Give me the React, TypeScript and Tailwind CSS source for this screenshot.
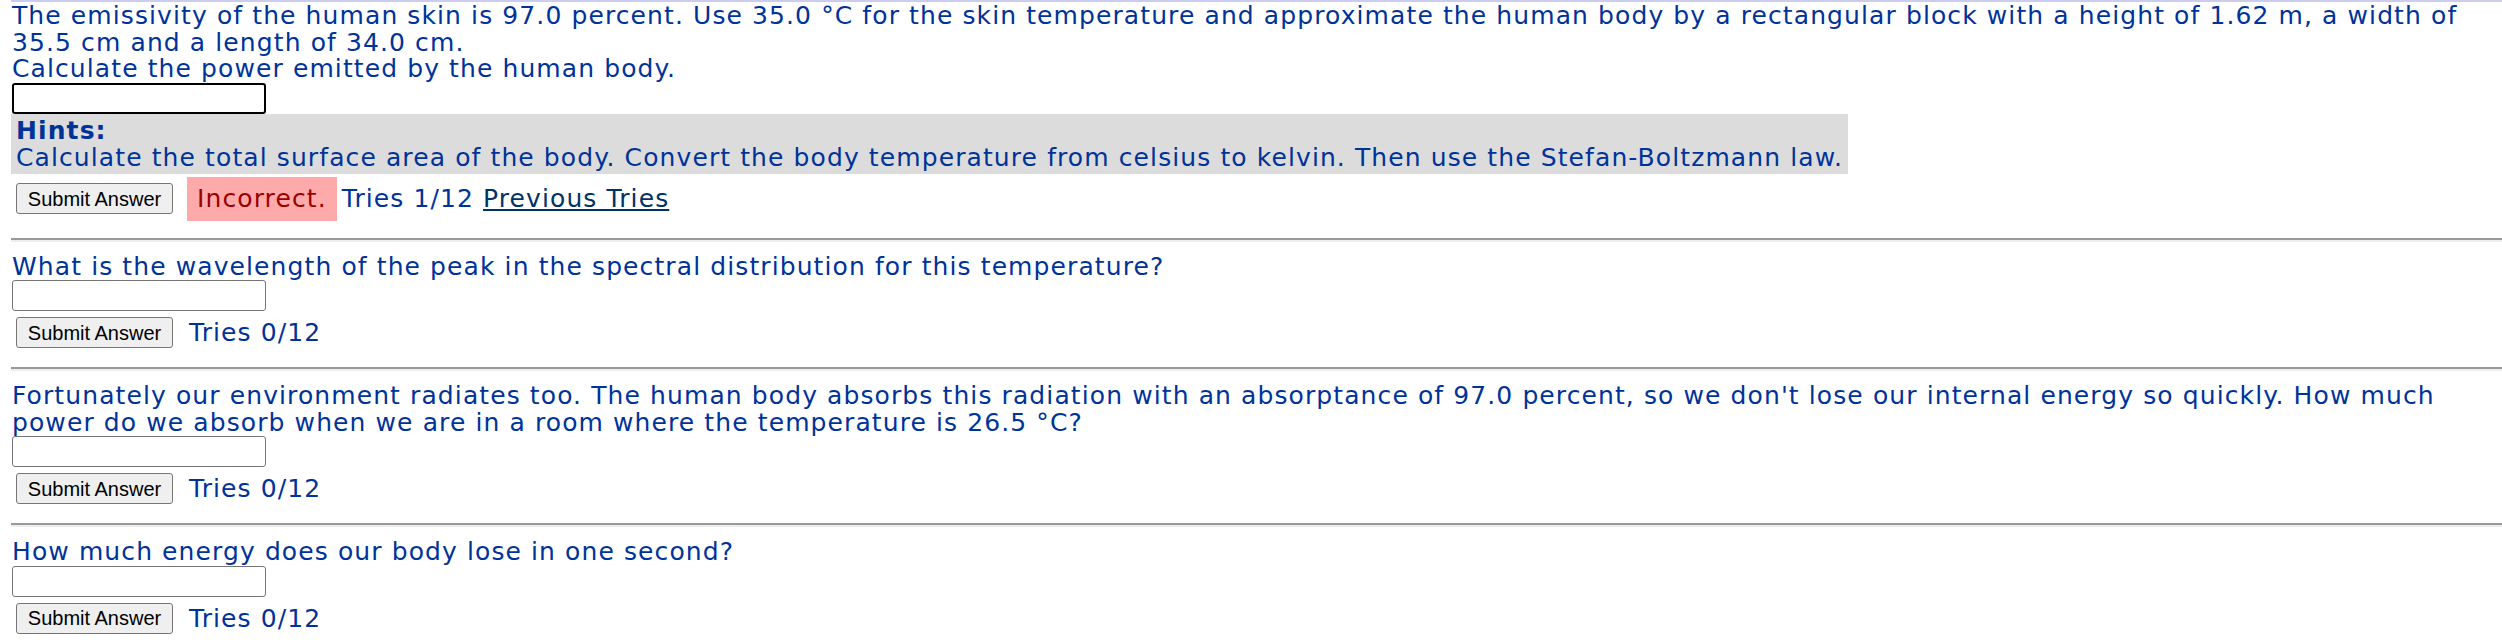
const font = "font-['DejaVu_Sans','Verdana',sans-serif]";

function SubmitButton() {
  return (
    <button className="ml-[5px] h-[31px] w-[157px] shrink-0 rounded-[3px] border border-[#767676] bg-[#efefef] font-['Liberation_Sans',Arial,sans-serif] text-[20px] leading-none tracking-normal text-black">
      Submit Answer
    </button>
  );
}

function AnswerInput({ focused }: { focused?: boolean }) {
  return (
    <input
      type="text"
      className={`ml-[1px] block h-[31px] w-[254px] rounded-[3px] bg-white ${
        focused ? 'border-2 border-black' : 'border border-[#767676]'
      }`}
    />
  );
}

function Rule() {
  return <div className="-mr-[12px] h-[4px] border-t-2 border-b-2 border-t-[#999999] border-b-[#eeeeee]" />;
}

function Question({ text, last }: { text: string; last?: boolean }) {
  return (
    <div className="pt-[12px]">
      <div className="pl-[1px] leading-[26.5px]">{text}</div>
      <AnswerInput />
      <div className="mt-[6px] flex h-[31px] items-center gap-[16px] leading-[31px]">
        <SubmitButton />
        <span>Tries 0/12</span>
      </div>
      {!last && (
        <div className="mt-[19px]">
          <Rule />
        </div>
      )}
    </div>
  );
}

export default function App() {
  return (
    <div className={`${font} min-h-[643px] overflow-hidden bg-white pl-[11px] pr-[12px] text-[25px] tracking-[1.1px] text-[#003399]`}>
      <div className="-mr-[12px] border-t-2 border-[#ccccee] pr-[12px] pt-[1px]">
        <div className="pl-[1px] leading-[26.5px]">
          The emissivity of the human skin is 97.0 percent. Use 35.0 °C for the skin temperature and approximate the human body by a rectangular block with a height of 1.62 m, a width of
          <br />
          35.5 cm and a length of 34.0 cm.
          <br />
          Calculate the power emitted by the human body.
        </div>
        <AnswerInput focused />
        <div className="w-fit bg-[#dcdcdc] px-[5px] pb-[3px] pt-[3px] leading-[27px]">
          <div className="font-bold">Hints:</div>
          <div className="whitespace-nowrap">
            Calculate the total surface area of the body. Convert the body temperature from celsius to kelvin. Then use the Stefan-Boltzmann law.
          </div>
        </div>
        <div className="mt-[3px] flex h-[44px] items-center">
          <SubmitButton />
          <span className="ml-[14px] flex h-[44px] items-center bg-[#ffaaaa] px-[10px] text-[#990000]">Incorrect.</span>
          <span className="ml-[5px]">Tries 1/12</span>
          <a href="#" className="ml-[9px] text-[#003366] underline">
            Previous Tries
          </a>
        </div>
        <div className="mt-[17px]">
          <Rule />
        </div>
        <Question text="What is the wavelength of the peak in the spectral distribution for this temperature?" />
        <Question text="Fortunately our environment radiates too. The human body absorbs this radiation with an absorptance of 97.0 percent, so we don't lose our internal energy so quickly. How much power do we absorb when we are in a room where the temperature is 26.5 °C?" />
        <Question text="How much energy does our body lose in one second?" last />
      </div>
    </div>
  );
}
